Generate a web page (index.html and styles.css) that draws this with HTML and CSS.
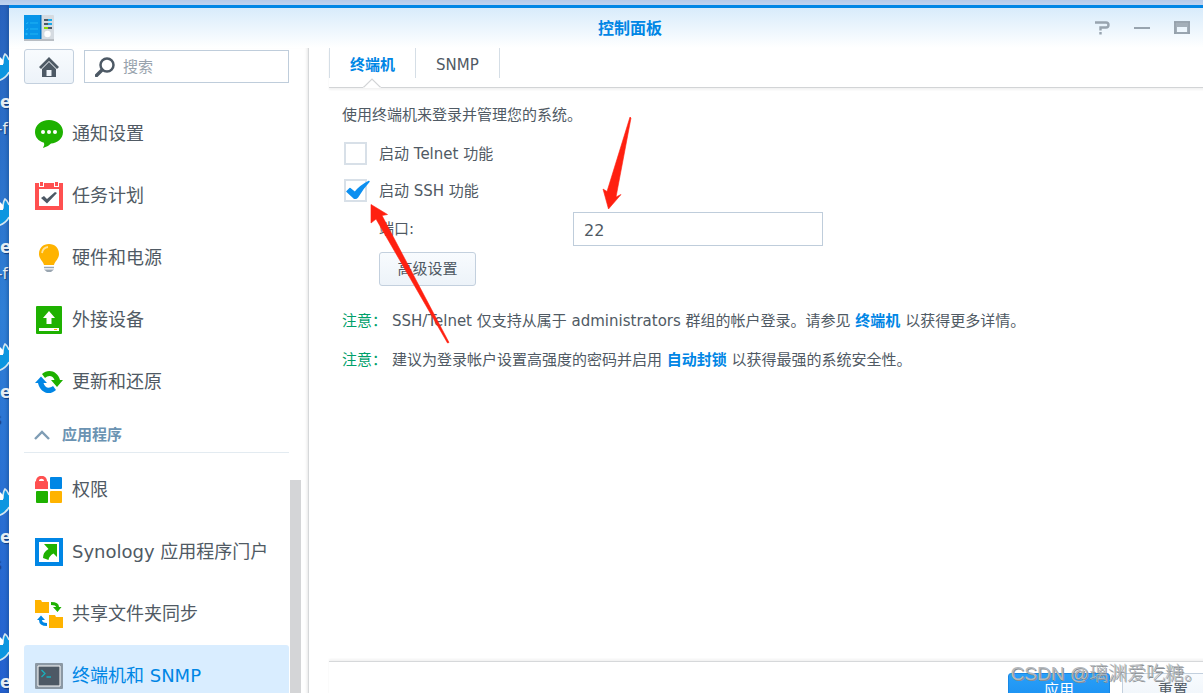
FILE: index.html
```html
<!DOCTYPE html>
<html lang="zh-CN">
<head>
<meta charset="utf-8">
<title>控制面板</title>
<link rel="stylesheet" href="styles.css">
</head>
<body>
<svg class="defs" aria-hidden="true">
  <symbol id="bird" viewBox="0 0 9 32"><path d="M-6 9 L-2 5 L1 11 Q2 4 5 2 L9 7 L9 23 Q4 28 -6 31Z" fill="#0c96e0"/><path d="M-3 12 L-1 5 L1 11 L3 11 Q3 5 5 2 Q7 3 9 8 M9 20 Q6 26 -2 29" fill="none" stroke="#d8e5ee" stroke-width="1.6"/><path d="M0 5V13H3V8" fill="#fff"/></symbol>
</svg>
<div class="desktop">
  <div class="shortcuts">
    <div class="shortcut"><svg><use href="#bird"/></svg><b>e</b><span>-f</span></div>
    <div class="shortcut"><svg><use href="#bird"/></svg><b>e</b><span>-f</span></div>
    <div class="shortcut"><svg><use href="#bird"/></svg><b>e</b><span class="dark">s</span></div>
    <div class="shortcut"><svg><use href="#bird"/></svg><b>e</b><span class="dark">s</span></div>
    <div class="shortcut"><svg><use href="#bird"/></svg><b>e</b></div>
  </div>
  <div class="window">
    <header class="titlebar">
      <svg class="app-icon" viewBox="0 0 30 27"><path d="M0 1h30v25H0z" fill="#b9bec4"/><path d="M17 0h12q1 0 1 1v23H17z" fill="#d5dbe1"/><path d="M0 0h17v24H0z" fill="#0795e9"/><path d="M16 0h1.500v24H16z" fill="#0676c4"/><path d="M2 8l1 1 1-2M2 14l1 1 1-2M6 8h8M6 14h8M6 19h8" stroke="#20b4f4" fill="none"/><circle cx="2.500" cy="19" r="1.200" fill="#20b4f4"/><path d="M20 5h8M20 9h8M20 13h8" stroke="#4d5965" stroke-width="2"/><path d="M24 5h4M24 9h4" stroke="#18a8e8" stroke-width="2"/><path d="M20 13h4" stroke="#8adb00" stroke-width="2"/><circle cx="23.500" cy="19" r="3.200" fill="#fff"/></svg>
      <h1>控制面板</h1>
      <div class="controls">
        <button aria-label="帮助"><svg viewBox="0 0 16 14"><path d="M1 1.500H12Q14.500 1.500 14.500 4T12 6.500H6.500V9.500M6.500 11V13.500" fill="none" stroke="#98a4af" stroke-width="2.400"/></svg></button>
        <button aria-label="最小化"><svg viewBox="0 0 16 14"><path d="M0 7H16" stroke="#98a4af" stroke-width="2"/></svg></button>
        <button aria-label="最大化"><svg viewBox="0 0 16 14"><path d="M0 0H16V13H0ZM3 6V11H13V6Z" fill="#a4afb9" fill-rule="evenodd"/><path d="M0 1H16M1 1V13M15 1V13M0 12H16" stroke="#8f9ba6" stroke-width="1"/></svg></button>
      </div>
    </header>
    <div class="content">
      <aside class="sidebar">
        <div class="nav">
          <div class="tools">
            <button class="home" aria-label="主页"><svg viewBox="0 0 22 22"><path d="M1 11 11 1 21 11 19 13 11 5 3 13Z" fill="#4d5965"/><path d="M11 6 4 13V21H18V13ZM8.500 14H13.500V20H8.500Z" fill="#4d5965" fill-rule="evenodd"/></svg></button>
            <label class="search"><svg viewBox="0 0 20 20"><circle cx="12" cy="8" r="6.500" fill="none" stroke="#4d5965" stroke-width="2.500"/><path d="M7 13 1.500 18.500" stroke="#4d5965" stroke-width="3.500" stroke-linecap="round"/></svg><input type="text" placeholder="搜索" aria-label="搜索"></label>
          </div>
          <ul class="list">
            <li><a href="#"><svg viewBox="0 0 28 28"><path d="M14 0C22 0 28 5 28 12S22 23 16 23.500Q13 27 8 28Q10 25 9 22.800C3 21 0 17 0 12 0 5 6 0 14 0Z" fill="#1eb100"/><circle cx="8" cy="12" r="2" fill="#fff"/><circle cx="14" cy="12" r="2" fill="#fff"/><circle cx="20" cy="12" r="2" fill="#fff"/></svg>通知设置</a></li>
            <li><a href="#"><svg viewBox="0 0 28 28"><path d="M0 1H28V28H0Z" fill="#ff5050"/><path d="M4 0h5v5H4zM19 0h5v5h-5z" fill="#fff"/><path d="M5 0h3v4H5zM20 0h3v4h-3z" fill="#ff5050"/><path d="M4 7H24V24H4Z" fill="#fff"/><path d="M6 16 9 14 12 17 20 10 22 11 12 21.500Z" fill="#4d5965"/></svg>任务计划</a></li>
            <li><a href="#"><svg viewBox="0 0 28 28"><path d="M14 0C20 0 24 4 24 10 24 15 20 17 19 21H9C8 17 4 15 4 10 4 4 8 0 14 0Z" fill="#ffb300"/><path d="M7 9Q8 3.500 13 3" fill="none" stroke="#ffe39a" stroke-width="1.800"/><path d="M9 23.500H19" stroke="#9aa6b1" stroke-width="1.500"/><path d="M9 25.500H19L16 28H12Z" fill="#9aa6b1"/></svg>硬件和电源</a></li>
            <li><a href="#"><svg viewBox="0 0 28 28"><rect x="1" width="26" height="28" rx="1" fill="#1eb100"/><path d="M14 5 20 12H16.500V18H11.500V12H8Z" fill="#fff"/><path d="M4 22H24V25H4Z" fill="#fff"/><path d="M19 23.500H22" stroke="#ffb300"/></svg>外接设备</a></li>
            <li><a href="#"><svg viewBox="0 0 28 28"><path d="M7 6C13 0 23 3 25 12H28L22 19 16 12H19.500C18 7 13 7 10 10Z" fill="#1eb100"/><path d="M21 22C15 28 5 25 3 15H0L6 8.500 12 15H8.500C10 20 14 21 18 18Z" fill="#0086e5"/></svg>更新和还原</a></li>
          </ul>
          <button class="section"><svg viewBox="0 0 16 10"><path d="M1 9 8 2 15 9" fill="none" stroke="#7f9db5" stroke-width="2.400"/></svg>应用程序</button>
          <ul class="list second">
            <li><a href="#"><svg viewBox="0 0 28 28"><path d="M0 6.500Q0 5 1 5C1-2 12-2 12 5Q13 5 13 6.500V13H0ZM4 5H9C9 2 4 2 4 5Z" fill="#ff5050" fill-rule="evenodd"/><rect x="15" y="1" width="12" height="12" rx="1" fill="#0086e5"/><rect x="1" y="15" width="12" height="12" rx="1" fill="#1eb100"/><rect x="15" y="15" width="12" height="12" rx="1" fill="#ffb300"/></svg>权限</a></li>
            <li><a href="#"><svg viewBox="0 0 28 28"><path d="M0 0H28V28H0Z" fill="#0086e5"/><path d="M4 4H24V24H4Z" fill="#fff"/><path d="M9 6H22V19L18.500 15.500Q14 18 13.500 22L8 20Q8 14 13.500 11Z" fill="#1eb100"/></svg>Synology 应用程序门户</a></li>
            <li><a href="#"><svg viewBox="0 0 28 28"><path d="M0 0H6L7 2H14V13H0ZM14 15H20L21 17H28V28H14Z" fill="#ffb300"/><path d="M16 2Q24 2 24 7H26.500L22.500 12 18 7H21Q21 5 16 5Z" fill="#1eb100"/><path d="M12 26Q4 26 4 20H2L6 15.500 10 20H7Q7 23 12 23Z" fill="#0086e5"/></svg>共享文件夹同步</a></li>
            <li><a href="#" class="selected"><svg viewBox="0 0 28 28"><rect y="1" width="28" height="26" rx="1" fill="#8b98a4"/><path d="M3 4H25V24H3Z" fill="#4d5965" stroke="#fff"/><path d="M6.500 8 10 11.500 6.500 15M11.500 15H16" fill="none" stroke="#18b0bd" stroke-width="1.300"/></svg>终端机和 SNMP</a></li>
          </ul>
        </div>
        <div class="scroll"></div>
      </aside>
      <main class="main">
        <nav class="tabs">
          <button class="active">终端机</button><button>SNMP</button>
          <svg class="pointer" viewBox="0 0 18 10"><path d="M0 9H1L9 1 17 9H18V10H0Z" fill="#fff"/><path d="M0 9H1L9 1 17 9H18" fill="none" stroke="#d2d4d6" stroke-width="1.200"/></svg>
        </nav>
        <form class="panel">
          <p class="intro">使用终端机来登录并管理您的系统。</p>
          <label class="check"><input type="checkbox"><span>启动 Telnet 功能</span></label>
          <label class="check"><input type="checkbox" checked><svg class="tick" viewBox="0 0 24 20"><path d="M1 11.500 4 8.500 9 12.500Q14 6 23 1.500 17 8 11.500 17 10 19 8 18Z" fill="#0c8ff0" stroke="#0c8ff0" stroke-width="1.500" stroke-linejoin="round"/></svg><span>启动 SSH 功能</span></label>
          <div class="field"><label for="port">端口:</label><input id="port" type="text" value="22"></div>
          <button type="button" class="btn advanced">高级设置</button>
          <p class="note"><span class="key">注意：</span><span>SSH/Telnet 仅支持从属于 administrators 群组的帐户登录。请参见 <a href="#">终端机</a> 以获得更多详情。</span></p>
          <p class="note"><span class="key">注意：</span><span>建议为登录帐户设置高强度的密码并启用 <a href="#">自动封锁</a> 以获得最强的系统安全性。</span></p>
        </form>
        <footer class="footer">
          <button class="btn primary">应用</button>
          <button class="btn">重置</button>
        </footer>
      </main>
    </div>
  </div>
  <svg class="arrows" width="700" height="400" aria-hidden="true"><path d="M630 117 631 118 616 197 621 194.500 608.500 209 603 189 607 191.500ZM371 204.500 387.500 214.500 382 215.500 449 342.500 447.500 343 376 219 371 223Z" fill="#ff2010" stroke="#ff2010" stroke-width=".6"/></svg>
  <div class="watermark">CSDN @璃渊爱吃糖。</div>
</div>
</body>
</html>
```
FILE: styles.css
```css
* { box-sizing: border-box; }
body { margin: 0; overflow: hidden; color: #505a64; font: 15px/20px "DejaVu Sans", "Noto Sans CJK SC", sans-serif; }
button, input { font: inherit; color: inherit; margin: 0; }
button { background: none; border: 0; padding: 0; }
a { color: #0086e5; text-decoration: none; }
h1, p, ul { margin: 0; padding: 0; }
svg { display: block; flex: none; }
.defs { position: absolute; width: 0; height: 0; }

.desktop { position: relative; display: flex; height: 100vh; padding-top: 5px; overflow: hidden; background: linear-gradient(#b5cbea, #bfd3f0 5px, transparent 5px), linear-gradient(#2862bd, #2f7fd6 45%, #2460cf); }
.shortcuts { flex: none; width: 9px; overflow: hidden; padding-top: 47px; color: #fff; box-shadow: inset -2px 0 3px #17488466; }
.shortcut { height: 145px; white-space: nowrap; }
.shortcut svg { width: 9px; height: 32px; }
.shortcut b, .shortcut span { display: block; height: 30px; line-height: 30px; font-size: 17px; color: #e4ecf3; text-shadow: 1px 1px 1px #123a78; }
.shortcut b { padding-top: 3px; }
.shortcut span { margin-left: -3px; font-size: 15px; }
.shortcut .dark { color: #342659; margin-left: -7px; }

/* The window runs past the right and bottom edges of the desktop. */
.window { flex: none; display: flex; flex-direction: column; width: calc(100% + 40px); height: calc(100% + 27px); border-top: 3px solid #0086e5; background: #fff; }
.titlebar { flex: none; display: flex; align-items: center; height: 40px; padding: 0 62px 0 15px; background: linear-gradient(#d8ebfb, #fff); }
.app-icon { width: 30px; height: 27px; }
.titlebar h1 { flex: 1; padding: 2px 0 0 112px; text-align: center; font-size: 16px; line-height: 20px; color: #0086e5; }
.controls { display: flex; gap: 24px; }
.controls svg { width: 16px; height: 14px; }
.content { flex: 1; min-height: 0; display: flex; }

.sidebar { flex: none; display: flex; width: 300px; padding: 1px 0 0 15px; overflow: hidden; border-right: 1px solid #d6d8da; box-shadow: inset -3px 0 3px -2px #0000001a; }
.nav { width: 265px; }
.tools { display: flex; align-items: center; gap: 10px; height: 35px; }
.home { display: flex; align-items: center; justify-content: center; width: 50px; height: 35px; border: 1px solid #c3d0de; border-radius: 3px; background: linear-gradient(#f8fbfe, #edf3f9); }
.home svg { width: 22px; height: 22px; }
.search { flex: 1; min-width: 0; display: flex; align-items: center; gap: 8px; height: 33px; padding-left: 10px; border: 1px solid #bfcddb; }
.search svg { width: 20px; height: 20px; }
.search input { flex: 1; min-width: 0; border: 0; padding: 0; background: none; outline: 0; }
.search input::placeholder { color: #98a3ad; opacity: 1; }
.list { list-style: none; padding-top: 19px; }
.list.second { padding-top: 6px; }
.list a { display: flex; align-items: center; gap: 9px; height: 62px; padding-left: 11px; border-radius: 3px; font-size: 18px; white-space: nowrap; color: #505a64; }
.list svg { width: 28px; height: 28px; }
.list a.selected { background: #d9edff; color: #0086e5; }
.section { display: flex; align-items: center; gap: 12px; width: 100%; height: 40px; padding: 4px 0 0 10px; border-bottom: 1px solid #e3ebf1; font-weight: bold; color: #6b93b2; }
.section svg { width: 16px; height: 10px; }
.scroll { width: 11px; margin: 431px 0 0 1px; background: #d4d5d7; }

.main { flex: 1; min-width: 0; display: flex; flex-direction: column; padding-left: 20px; }
.tabs { position: relative; display: flex; height: 40px; padding-bottom: 9px; border-bottom: 1px solid #d2d4d6; box-shadow: 0 2px 2px #0000000d; }
.tabs button { padding: 3px 20px 0; border-right: 1px solid #d5dee6; }
.tabs .active { border-left: 1px solid #d5dee6; font-weight: bold; color: #0086e5; }
.pointer { position: absolute; left: 34px; bottom: -1px; width: 18px; height: 10px; }
.panel { flex: 1; padding: 17px 13px; }
.intro { margin-bottom: 17px; }
.check { position: relative; display: flex; align-items: center; gap: 12px; width: fit-content; height: 23px; margin: 0 0 14px 2px; }
.check input { appearance: none; width: 23px; height: 23px; border: 2px solid #d8e0e8; background: #fff; }
.tick { position: absolute; left: 2px; top: 1px; width: 24px; height: 20px; }
.field { display: flex; align-items: center; margin: -4px 0 6px 37px; }
.field label { width: 194px; }
.field input { width: 250px; height: 34px; padding: 2px 10px 0; border: 1px solid #bfcddb; font-size: 16px; }
.btn { height: 34px; border: 1px solid #c3d0de; border-radius: 3px; background: linear-gradient(#f8fbfe, #edf3f9); }
.advanced { width: 97px; margin: 0 0 25px 37px; }
.note { display: flex; gap: 5px; margin-bottom: 19px; white-space: nowrap; }
.note .key { width: 45px; color: #00a06a; }
.note a { font-weight: bold; }
.footer { flex: none; display: flex; justify-content: flex-end; gap: 12px; height: 59px; padding: 11px 28px 0 0; border-top: 1px solid #d6d8da; box-shadow: 0 -2px 2px #0000000d; }
.footer .btn { width: 102px; }
.footer .primary { border-color: #1788e6; background: linear-gradient(#2a9ff8, #168df0); color: #fff; }

.arrows { position: absolute; left: 0; top: 0; pointer-events: none; }
.watermark { position: absolute; right: 0; bottom: 6px; font: 19px/26px "Liberation Sans", "Noto Sans CJK SC", sans-serif; font-weight: 300; color: #b4b8bc; text-shadow: 1px 1px 0 #8a8e92; white-space: nowrap; }
```
